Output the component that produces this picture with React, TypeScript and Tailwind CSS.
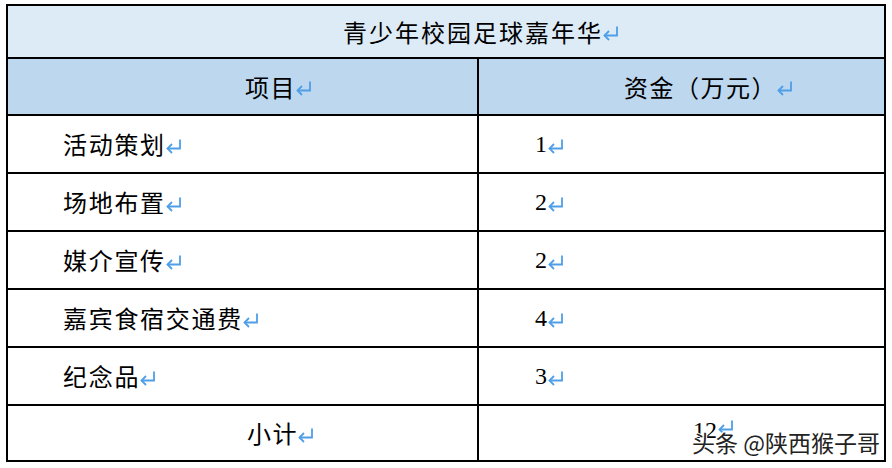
import React from "react";

const Mark = () => (
  <svg width="17" height="17" viewBox="0 0 17 17" className="ml-[-1px] mt-[4px] shrink-0">
    <path d="M15 1.5 V10.5 H2.5" fill="none" stroke="#4f9ee8" strokeWidth="1.8" />
    <path d="M7 6 L2.5 10.5 L7 15" fill="none" stroke="#4f9ee8" strokeWidth="1.8" />
  </svg>
);

const cjk = { fontFamily: '"Noto Sans CJK SC", "Noto Sans", sans-serif' };

const rows: [string, string][] = [
  ["活动策划", "1"],
  ["场地布置", "2"],
  ["媒介宣传", "2"],
  ["嘉宾食宿交通费", "4"],
  ["纪念品", "3"],
];

export default function App() {
  return (
    <div className="w-[892px] h-[468px] bg-white relative overflow-hidden pt-[4px] pl-[6px]">
      <div className="w-[880px] border-2 border-black text-[24px] text-black">
        <div className="h-[53px] border-b-2 border-black bg-[#ddebf7] flex items-center pl-[335px]">
          <span style={cjk} className="tracking-[2px] leading-none">青少年校园足球嘉年华</span>
          <Mark />
        </div>
        <div className="h-[57px] border-b-2 border-black bg-[#bdd7ee] flex">
          <div className="w-[471px] border-r-2 border-black flex items-center pl-[237px]">
            <span style={cjk} className="tracking-[1.5px] leading-none">项目</span>
            <Mark />
          </div>
          <div className="flex-1 flex items-center pl-[145px]">
            <span style={cjk} className="tracking-[1.5px] leading-none">资金（万元）</span>
            <Mark />
          </div>
        </div>
        {rows.map(([name, v]) => (
          <div key={name} className="h-[58px] border-b-2 border-black flex">
            <div className="w-[471px] border-r-2 border-black flex items-center pl-[55px]">
              <span style={cjk} className="tracking-[1.7px] leading-none">{name}</span>
              <Mark />
            </div>
            <div className="flex-1 flex items-center pl-[56px]">
              <span style={{ fontFamily: '"Liberation Serif", serif' }} className="leading-none">{v}</span>
              <span className="ml-[1px] flex"><Mark /></span>
            </div>
          </div>
        ))}
        <div className="h-[54px] flex">
          <div className="w-[471px] border-r-2 border-black flex items-center pl-[239px]">
            <span style={cjk} className="tracking-[1.5px] leading-none">小计</span>
            <Mark />
          </div>
          <div className="flex-1 flex items-start pt-[12px] pl-[214px]">
            <span style={{ fontFamily: '"Liberation Serif", serif' }} className="leading-none">12</span>
            <span className="ml-[1px] flex mt-[-3px]"><Mark /></span>
          </div>
        </div>
      </div>
      <div
        className="absolute left-[692px] top-[431px] text-[23px] leading-none text-[#222] whitespace-nowrap"
        style={{
          ...cjk,
          textShadow:
            "1px 0 0 #fff, -1px 0 0 #fff, 0 1px 0 #fff, 0 -1px 0 #fff, 1px 1px 0 #fff, -1px -1px 0 #fff",
        }}
      >
        头条 @陕西猴子哥
      </div>
    </div>
  );
}
